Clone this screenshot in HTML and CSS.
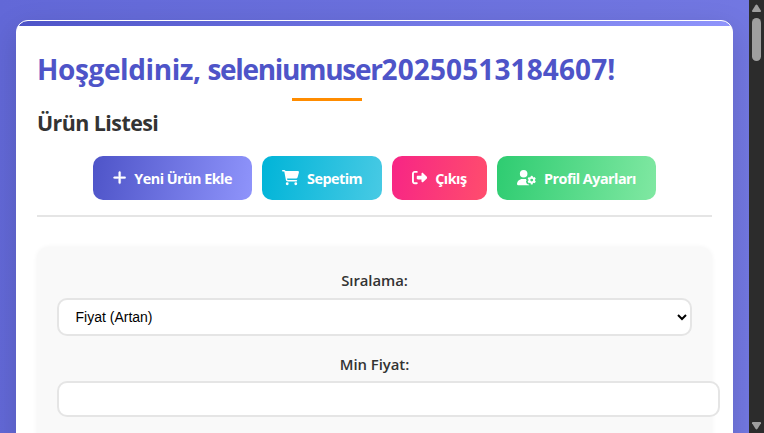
FILE: index.html
```html
<!DOCTYPE html>
<html lang="tr">
<head>
<meta charset="utf-8">
<title>Ürün Listesi</title>
<link rel="stylesheet" href="styles.css">
</head>
<body>
<div class="page">
  <main class="card">
    <h1><span class="greeting">Hoşgeldiniz, </span><span class="name">seleniumuser</span><span class="digits">20250513184607!</span></h1>
    <h2>Ürün Listesi</h2>
    <nav class="actions">
      <a class="btn add"><svg class="bold" viewBox="0 0 448 512" width="13.3" height="15.2"><path d="M256 80c0-17.7-14.3-32-32-32s-32 14.3-32 32V224H48c-17.7 0-32 14.3-32 32s14.3 32 32 32H192V432c0 17.7 14.3 32 32 32s32-14.3 32-32V288H400c17.7 0 32-14.3 32-32s-14.3-32-32-32H256V80z"/></svg><span>Yeni Ürün Ekle</span></a>
      <a class="btn cart"><svg viewBox="0 0 576 512" width="17.1" height="15.2"><path d="M0 24C0 10.7 10.7 0 24 0H69.5c22 0 41.5 12.8 50.6 32h411c26.3 0 45.5 25 38.6 50.4l-41 152.3c-8.5 31.4-37 53.3-69.5 53.3H170.7l5.4 28.5c2.2 11.3 12.1 19.5 23.6 19.5H488c13.3 0 24 10.7 24 24s-10.7 24-24 24H199.7c-34.6 0-64.3-24.6-70.7-58.5L77.4 54.5c-.7-3.8-4-6.5-7.9-6.5H24C10.7 48 0 37.3 0 24zM128 464a48 48 0 1 1 96 0 48 48 0 1 1 -96 0zm336-48a48 48 0 1 1 0 96 48 48 0 1 1 0-96z"/></svg><span>Sepetim</span></a>
      <a class="btn exit"><svg viewBox="0 0 512 512" width="15.2" height="15.2"><path d="M377.9 105.9L500.7 228.7c7.2 7.2 11.3 17.1 11.3 27.3s-4.1 20.1-11.3 27.3L377.9 406.1c-6.4 6.4-15 9.9-24 9.9c-18.7 0-33.9-15.2-33.9-33.9l0-62.1-128 0c-17.7 0-32-14.3-32-32l0-64c0-17.7 14.3-32 32-32l128 0 0-62.1c0-18.7 15.2-33.9 33.9-33.9c9 0 17.6 3.6 24 9.9zM160 96L96 96c-17.7 0-32 14.3-32 32l0 256c0 17.7 14.3 32 32 32l64 0c17.7 0 32 14.3 32 32s-14.3 32-32 32l-64 0c-53 0-96-43-96-96L0 128C0 75 43 32 96 32l64 0c17.7 0 32 14.3 32 32s-14.3 32-32 32z"/></svg><span>Çıkış</span></a>
      <a class="btn profile"><svg viewBox="0 0 640 512" width="19" height="15.2"><path d="M224 256A128 128 0 1 0 224 0a128 128 0 1 0 0 256zM178.3 304h91.4c11.8 0 23.4 1.2 34.5 3.3c-2.1 18.5 7.4 35.6 21.8 44.8c-16.6 10.6-26.7 31.6-20 53.3c4 12.9 9.4 25.5 16.4 37.6s15.2 23.1 24.4 33c15.7 16.9 39.6 18.4 57.2 8.7v.9c0 9.2 2.7 18.5 7.9 26.3H29.7C13.3 512 0 498.7 0 482.3C0 383.8 79.8 304 178.3 304z"/><path fill-rule="evenodd" d="M460 200Q496 186 532 200V237L562 254L594 236Q624 265 632 302L602 322V358L632 378Q624 415 594 444L562 426L532 443V480Q496 494 460 480V443L430 426L398 444Q368 415 360 378L390 358V322L360 302Q368 265 398 236L430 254L460 237ZM496 292a48 48 0 1 0 0 96 48 48 0 1 0 0-96z"/></svg><span>Profil Ayarları</span></a>
    </nav>
    <form class="filters">
      <label for="sort">Sıralama:</label>
      <select id="sort"><option>Fiyat (Artan)</option></select>
      <label for="min">Min Fiyat:</label>
      <input id="min" type="text">
    </form>
  </main>
</div>
<aside class="scrollbar">
  <svg viewBox="0 0 15 13" width="15" height="13"><path d="M7.5 4.5Q8 4.5 8.5 5.2L12 10.7Q12.3 12 11 12H4Q2.7 12 3 10.7L6.5 5.2Q7 4.5 7.5 4.5Z"/></svg>
  <div class="thumb"></div>
  <svg viewBox="0 0 15 13" width="15" height="13"><path d="M7.5 9.5Q8 9.5 8.5 8.8L12 3.3Q12.3 2 11 2H4Q2.7 2 3 3.3L6.5 8.8Q7 9.5 7.5 9.5Z"/></svg>
</aside>
</body>
</html>
```
FILE: styles.css
```css
* { box-sizing: border-box; }
body {
  margin: 0;
  height: 433px;
  overflow: hidden;
  display: flex;
  font-family: "Open Sans", "Noto Sans", sans-serif;
  color: #333;
}
.page {
  width: 749px;
  height: 433px;
  padding: 20px 16px 0;
  overflow: hidden;
  background: linear-gradient(95deg, #6268d7, #7378e2);
}
.card {
  width: 717px;
  height: 700px;
  padding: 0 20px;
  border: 1px solid #fff;
  border-radius: 12px;
  background: linear-gradient(90deg, #4e54c8, #8f94fb) top / 100% 5px no-repeat #fff;
  box-shadow: 0 10px 30px rgba(0, 0, 0, .15);
}
h1 {
  width: 580px;
  height: 80px;
  margin: 0;
  padding-top: 28px;
  font-size: 28px;
  line-height: 40px;
  font-weight: 700;
  color: #4e54c8;
  white-space: nowrap;
  background: linear-gradient(#ff8c00, #ff8c00) 50% 100% / 70px 3px no-repeat;
}
.greeting { letter-spacing: -.4px; }
.name { letter-spacing: -1.33px; }
.digits { letter-spacing: .12px; }
h2 {
  height: 55px;
  margin: 0;
  padding-top: 7px;
  font-size: 21.4px;
  line-height: 30px;
  letter-spacing: -.55px;
  font-weight: 700;
}
.actions {
  height: 61px;
  display: flex;
  justify-content: center;
  align-items: flex-start;
  gap: 10px;
  border-bottom: 2px solid #e5e5e5;
}
.btn {
  height: 44px;
  padding-left: 20px;
  display: flex;
  align-items: center;
  gap: 8px;
  border-radius: 10px;
  font-size: 14.4px;
  letter-spacing: -.53px;
  font-weight: 660;
  color: #fff;
  white-space: nowrap;
}
.btn svg { fill: currentColor; flex: none; }
.btn .bold { stroke: currentColor; stroke-width: 14px; }
.add { width: 159px; background: linear-gradient(100deg, #4e54c8, #8f94fb); }
.cart { width: 120px; background: linear-gradient(100deg, #00b4d8, #48cae4); }
.exit { width: 95px; background: linear-gradient(100deg, #f72585, #ff4d6d); }
.profile { width: 159px; background: linear-gradient(100deg, #2ecc71, #80e8a2); }
.filters {
  height: 500px;
  margin-top: 30px;
  padding: 20px;
  display: flex;
  flex-direction: column;
  border-radius: 12px;
  background: #f9f9f9;
  box-shadow: 0 0 5px rgba(0, 0, 0, .05);
}
label {
  height: 31px;
  line-height: 27px;
  font-size: 14.9px;
  letter-spacing: -.05px;
  font-weight: 600;
  text-align: center;
}
select, input {
  border: 2px solid #e5e5e5;
  border-radius: 10px;
  background-color: #fff;
  color: #000;
  font: 14px "Liberation Sans", sans-serif;
}
select { width: 635px; height: 38px; padding: 0 0 0 12.5px; margin-bottom: 15px; }
select + label { height: 30px; }
input { width: 663px; height: 36px; padding: 0 15px; }
.scrollbar {
  width: 15px;
  height: 433px;
  display: flex;
  flex-direction: column;
  align-items: center;
  background: #2c2c2c;
}
.scrollbar svg { fill: #9f9f9f; }
.thumb {
  width: 9px;
  height: 43px;
  margin: 5px 0 auto;
  border-radius: 5px;
  background: #9f9f9f;
}
```
